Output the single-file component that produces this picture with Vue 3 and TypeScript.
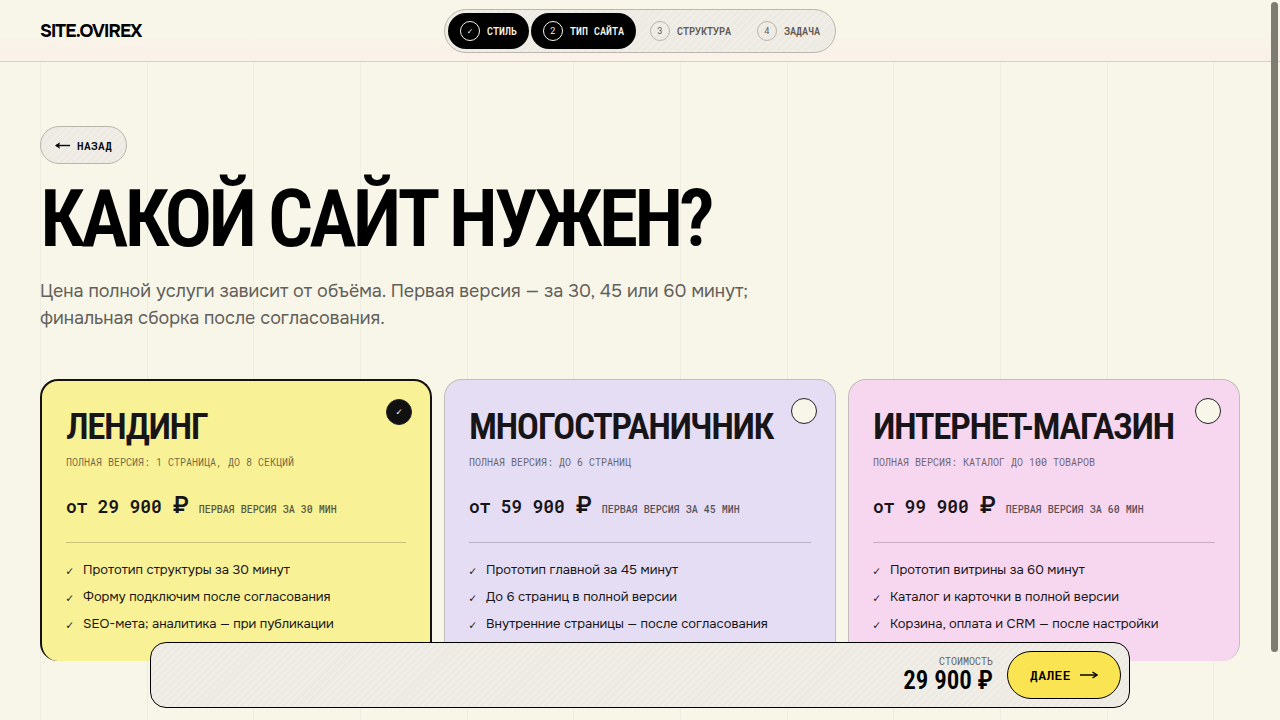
<script setup lang="ts">
import { ref } from 'vue'

interface Step { mark: string; label: string; active: boolean }
interface Plan {
  id: string
  title: string
  scope: string
  price: string
  first: string
  features: string[]
}

const steps: Step[] = [
  { mark: '✓', label: 'Стиль', active: true },
  { mark: '2', label: 'Тип сайта', active: true },
  { mark: '3', label: 'Структура', active: false },
  { mark: '4', label: 'Задача', active: false },
]

const plans: Plan[] = [
  {
    id: 'landing',
    title: 'Лендинг',
    scope: 'Полная версия: 1 страница, до 8 секций',
    price: '29 900',
    first: 'Первая версия за 30 мин',
    features: ['Прототип структуры за 30 минут', 'Форму подключим после согласования', 'SEO-мета; аналитика — при публикации'],
  },
  {
    id: 'multipage',
    title: 'Многостраничник',
    scope: 'Полная версия: до 6 страниц',
    price: '59 900',
    first: 'Первая версия за 45 мин',
    features: ['Прототип главной за 45 минут', 'До 6 страниц в полной версии', 'Внутренние страницы — после согласования'],
  },
  {
    id: 'shop',
    title: 'Интернет-магазин',
    scope: 'Полная версия: каталог до 100 товаров',
    price: '99 900',
    first: 'Первая версия за 60 мин',
    features: ['Прототип витрины за 60 минут', 'Каталог и карточки в полной версии', 'Корзина, оплата и CRM — после настройки'],
  },
]

const selected = ref('landing')
</script>

<template>
  <div class="page">
    <header class="topbar">
      <a class="logo" href="#">SITE.OVIREX</a>
      <nav class="steps hatch">
        <button v-for="s in steps" :key="s.label" type="button" class="step" :class="{ active: s.active }">
          <span class="mark">{{ s.mark }}</span>
          <span>{{ s.label }}</span>
        </button>
      </nav>
    </header>

    <main class="content">
      <button type="button" class="back hatch">
        <svg width="15" height="8" viewBox="0 0 15 8" aria-hidden="true">
          <path d="M1 4.500h14" stroke="currentColor" stroke-width="1.4" />
          <path d="M0 4.500 5 1.300 4 4.500l1 3.200z" fill="currentColor" />
        </svg>
        <span>Назад</span>
      </button>
      <h1>Какой сайт нужен?</h1>
      <p class="lead">
        Цена полной услуги зависит от объёма. Первая версия — за 30, 45 или 60 минут; финальная сборка после согласования.
      </p>

      <div class="plans">
        <button
          v-for="p in plans"
          :key="p.id"
          type="button"
          class="plan"
          :class="[p.id, { selected: selected === p.id }]"
          :aria-pressed="selected === p.id"
          @click="selected = p.id"
        >
          <span class="tick">{{ selected === p.id ? '✓' : '' }}</span>
          <span class="title">{{ p.title }}</span>
          <span class="scope">{{ p.scope }}</span>
          <span class="pricing">
            <span class="price">от {{ p.price }} <span class="rub">₽</span></span>
            <span class="first">{{ p.first }}</span>
          </span>
          <span class="features">
            <span v-for="f in p.features" :key="f" class="feature">
              <span class="check">✓</span><span>{{ f }}</span>
            </span>
          </span>
        </button>
      </div>
    </main>

    <div class="dock hatch">
      <div class="total">
        <span class="total-label">Стоимость</span>
        <strong>29 900 ₽</strong>
      </div>
      <button type="button" class="next">
        <span>Далее</span>
        <svg width="18" height="10" viewBox="0 0 18 10" aria-hidden="true">
          <path d="M0 5h17" stroke="currentColor" stroke-width="1.5" />
          <path d="M12.500 2 17 5l-4.500 3" fill="none" stroke="currentColor" stroke-width="1.5" />
        </svg>
      </button>
    </div>
    <div class="scroll-thumb" aria-hidden="true"></div>
  </div>
</template>

<style>
body {
  background: #f8f5e9;
}
</style>

<style scoped>
.page {
  --mono: "Roboto Mono", "DejaVu Sans Mono", monospace;
  --narrow: "Roboto Condensed", "Liberation Sans Narrow", Roboto, sans-serif;
  --text: Onest, Inter, sans-serif;
  height: 100vh;
  overflow: hidden;
  position: relative;
  color: #000;
  font-family: var(--text);
  background: repeating-linear-gradient(90deg, #efece1 0 1px, transparent 1px calc(100vw / 12)) 40px 0 no-repeat #f8f5e9;
}
button {
  margin: 0;
  font: inherit;
  color: inherit;
  cursor: pointer;
}
.hatch {
  background: repeating-linear-gradient(135deg, #f1eee7 0 2px, #edeae3 2px 5px);
}
.topbar {
  display: grid;
  grid-template-columns: 1fr auto 1fr;
  align-items: center;
  padding: 9px 40px 8px;
  border-bottom: 1px solid #dacfc6;
  background: linear-gradient(#f8f5e9 60%, #faf1e8 80%);
}
.logo {
  color: #000;
  text-decoration: none;
  font: 700 18px/24px var(--text);
  letter-spacing: -0.05em;
}
.steps {
  display: flex;
  gap: 2px;
  padding: 3px;
  border: 1px solid #bab7ad;
  border-radius: 22px;
}
.step {
  display: flex;
  align-items: center;
  gap: 7px;
  height: 36px;
  padding: 0 12px;
  border: 0;
  border-radius: 18px;
  background: none;
  color: #5d5a54;
  font: 600 10px/17px var(--mono);
  text-transform: uppercase;
}
.step.active {
  background: #000;
  color: #f8f5e9;
}
.mark {
  width: 20px;
  height: 20px;
  box-sizing: border-box;
  border: 1px solid #b8b5ac;
  border-radius: 50%;
  font-weight: 400;
  font-size: 9px;
  line-height: 18px;
}
.active .mark {
  border-color: #f8f5e9;
}
.content {
  padding: 64px 40px 0;
}
.back {
  display: flex;
  align-items: center;
  gap: 7px;
  height: 38px;
  padding: 0 14px;
  border: 1px solid #b9b5ab;
  border-radius: 19px;
  font: 600 11px/17px var(--mono);
  letter-spacing: 0.04em;
  text-transform: uppercase;
}
h1 {
  margin: 14px 0 18px;
  font: 600 80px/82px var(--narrow);
  letter-spacing: -0.05em;
  text-transform: uppercase;
}
.lead {
  margin: 0;
  max-width: 720px;
  color: #625f59;
  font-size: 18px;
  line-height: 27px;
}
.plans {
  display: grid;
  grid-template-columns: repeat(3, 1fr);
  gap: 12px;
  margin-top: 47px;
}
.plan {
  position: relative;
  display: flex;
  flex-direction: column;
  align-items: stretch;
  padding: 25px 24px 27px;
  border: 1px solid #c3bdb9;
  border-bottom: 0;
  border-radius: 18px;
  text-align: left;
  color: #171518;
}
.plan.selected {
  padding-top: 24px;
  border-width: 2px 2px 0;
  border-color: #14120c;
}
.landing { background: #f9f195; }
.multipage { background: #e5ddf3; }
.shop { background: #f7d7ef; }
.tick {
  position: absolute;
  top: 18px;
  right: 18px;
  width: 26px;
  height: 26px;
  box-sizing: border-box;
  border: 1px solid #222;
  border-radius: 50%;
  background: #f8f5e9;
  color: #f8f5e9;
  font: 10px/24px var(--mono);
  text-align: center;
}
.selected .tick {
  background: #111;
}
.title {
  font: 600 37px/44px var(--narrow);
  letter-spacing: -0.04em;
  text-transform: uppercase;
}
.scope,
.first {
  font: 10px/16px var(--mono);
  text-transform: uppercase;
  opacity: 0.62;
}
.first {
  font-weight: 500;
  opacity: 0.7;
}
.scope {
  margin-top: 6px;
}
.pricing {
  display: flex;
  align-items: baseline;
  gap: 10px;
  height: 32px;
  margin-top: 19px;
}
.price {
  font: 600 18px/32px var(--mono);
  letter-spacing: -0.01em;
}
.rub {
  font: 600 24px/28px var(--text);
}
.features {
  display: grid;
  gap: 7px;
  margin-top: 20px;
  padding-top: 17px;
  border-top: 1px solid rgb(30 20 30 / 22%);
}
.feature {
  display: flex;
  gap: 9px;
  font-size: 13px;
  line-height: 20px;
}
.check {
  width: 8px;
  font-family: var(--mono);
  font-size: 12px;
}
.dock {
  position: absolute;
  bottom: 12px;
  left: 50%;
  transform: translateX(-50%);
  width: min(980px, 100% - 24px);
  box-sizing: border-box;
  display: flex;
  align-items: center;
  justify-content: flex-end;
  gap: 14px;
  padding: 8px;
  border: 1px solid #000;
  border-radius: 16px;
}
.total {
  display: grid;
  justify-items: end;
}
.total-label {
  color: #66635c;
  font: 10px/12px var(--mono);
  text-transform: uppercase;
}
.total strong {
  font: 600 25px/26px var(--narrow);
}
.next {
  display: flex;
  align-items: center;
  gap: 9px;
  height: 48px;
  padding: 0 22px;
  border: 1px solid #000;
  border-radius: 24px;
  background: #fae452;
  font: 600 13px/20px var(--mono);
  letter-spacing: 0.03em;
  text-transform: uppercase;
}
.scroll-thumb {
  position: absolute;
  top: 2px;
  right: 2px;
  width: 7px;
  height: 650px;
  border-radius: 4px;
  background: #7e7b73;
}
</style>
